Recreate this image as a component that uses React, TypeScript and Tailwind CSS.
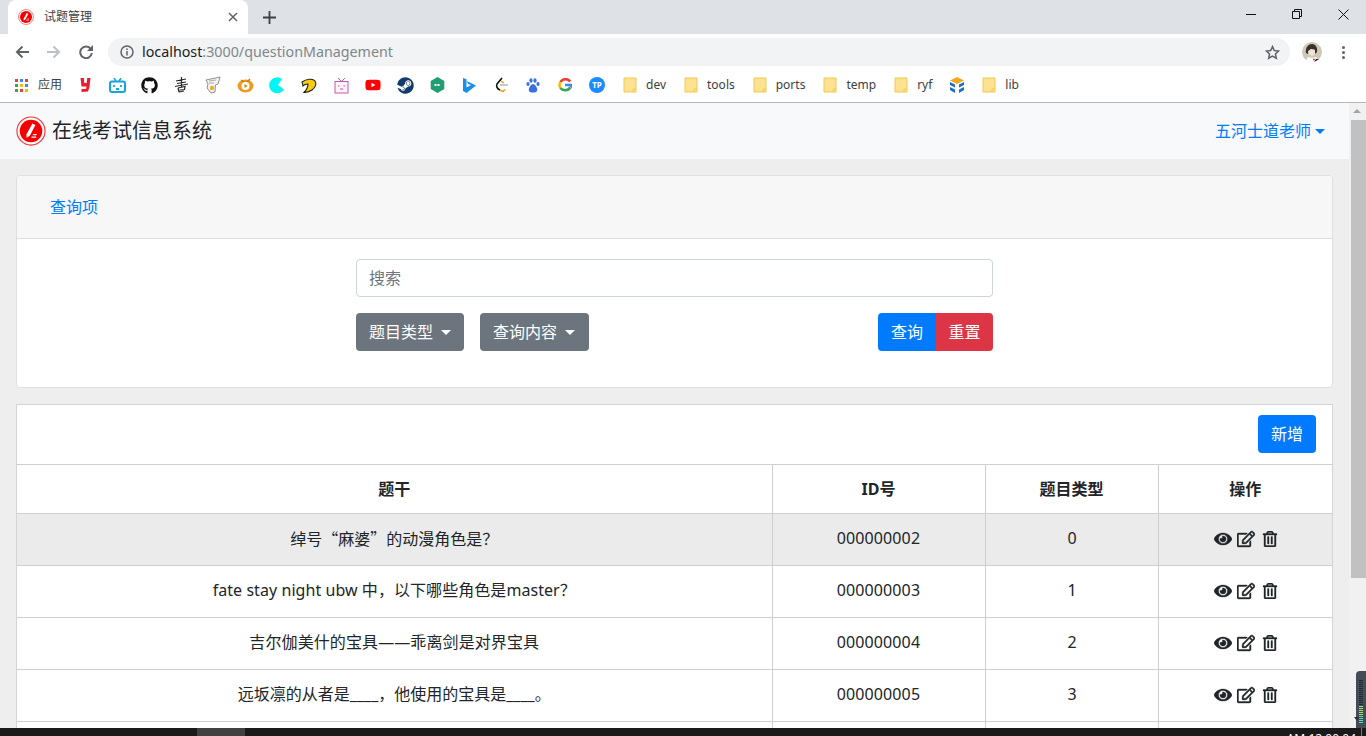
import {FC, ReactNode} from 'react';
import {FaEye, FaRegEdit, FaRegTrashAlt, FaGithub, FaSteam, FaYoutube} from 'react-icons/fa';

const Logo: FC<{size: number}> = ({size}) => (
    <svg width={size} height={size} viewBox="0 0 32 32">
        <circle cx="16" cy="16" r="15" fill="none" stroke="#f53030" strokeWidth="1.200"/>
        <circle cx="16" cy="16" r="12" fill="#f50000"/>
        <path d="M17.500 8l3.200 1.600-6 11.400-3.400 2.200-.1-3.800z" fill="#fff"/>
        <path d="M16.500 22.500h5M18 19.800h4" stroke="#fff" strokeWidth="1.300"/>
    </svg>
);

const Folder: FC = () => (
    <svg width="14" height="16" viewBox="0 0 14 16" className="shrink-0">
        <path d="M1 1h12v14H1z" fill="#fde293" stroke="#f2c94c"/>
        <path d="M10 15v-3h3" fill="none" stroke="#f2c94c"/>
    </svg>
);

const IconBox: FC<{children: ReactNode}> = ({children}) => (
    <div className="w-[32px] h-[20px] flex items-center justify-center shrink-0">{children}</div>
);

const AppsGrid: FC = () => {
    const colors = ['#ea4335', '#4285f4', '#ea4335', '#34a853', '#fbbc05', '#4285f4', '#34a853', '#ea4335', '#fbbc05'];
    return (
        <div className="grid grid-cols-3 gap-[2px] w-[13px]">
            {colors.map((color, i) => <span key={i} className="w-[3px] h-[3px]" style={{backgroundColor: color}}/>)}
        </div>
    );
};

const bookmarkIcons: ReactNode[] = [
    <svg width="11" height="14" viewBox="0 0 11 14"><path d="M.5 0h3.300l.5 5h2.400l.5-5h3.300L9.500 9 8 13.500l-6.500.500V11h4.500l.5-2.500H1.500z" fill="#ec1c2e"/></svg>,
    <svg width="17" height="15" viewBox="0 0 17 15"><path d="M5 0l2 3M12 0l-2 3" stroke="#12a5e0" strokeWidth="1.500"/><rect x="1" y="3.500" width="15" height="10.500" rx="2" fill="none" stroke="#12a5e0" strokeWidth="2"/><path d="M5 7v2M12 7v2M7 11h3" stroke="#12a5e0" strokeWidth="1.800"/></svg>,
    <FaGithub size={17} color="#111"/>,
    <svg width="13" height="16" viewBox="0 0 13 16"><path d="M1 4l10-2M2 6.500l9-1.500M0 9.500l13-2.500M6.500 0v10M3 11l7-1.500-.5 3-5 .5M4 15l5-1M3 11l1 4" stroke="#222" strokeWidth="1.200" fill="none"/></svg>,
    <svg width="17" height="18" viewBox="0 0 17 18"><path d="M1 4l14-3-2 7-2.500 1L10 16l-4 1-4-5 1-4z" fill="#f2f2ee" stroke="#777" strokeWidth=".8"/><path d="M4 5l7-1M4 7l5 0" stroke="#999" strokeWidth=".8"/><circle cx="7" cy="12" r="2.200" fill="#e8b03c"/></svg>,
    <svg width="17" height="16" viewBox="0 0 17 16"><ellipse cx="8.500" cy="9" rx="8" ry="6.500" fill="#ee9a1e"/><path d="M4 3l3 2M13 2l-3 3" stroke="#d07c0a" strokeWidth="1.500"/><circle cx="8.500" cy="9" r="4" fill="#fff"/><path d="M7.500 7l3 2-3 2z" fill="#d07c0a"/></svg>,
    <svg width="16" height="16" viewBox="0 0 16 16"><path d="M13 2A8 8 0 1 0 15 12.500L9 8z" fill="#00f5f5"/></svg>,
    <svg width="16" height="15" viewBox="0 0 16 15"><path d="M1 4c4-3 11-4 13-1s0 7-3 9-6 2.500-8 2.500c2-2 4-5 4-8.500-2 0-4 .5-5 2z" fill="#f8cc10" stroke="#222" strokeWidth="1.100"/></svg>,
    <svg width="15" height="17" viewBox="0 0 15 17"><path d="M4 1l3 3M11 1L8 4" stroke="#c05aa8" strokeWidth="1"/><rect x="1" y="4.500" width="13" height="11.500" fill="#fdf2f8" stroke="#c05aa8"/><path d="M4 9h1.500M9.500 9H11M6 12h3" stroke="#c05aa8"/></svg>,
    <FaYoutube size={16} color="#f00"/>,
    <FaSteam size={17} color="#123a6b"/>,
    <svg width="15" height="16" viewBox="0 0 15 16"><path d="M7.500 0l6.800 4v8l-6.800 4L.7 12V4z" fill="#1e9e72"/><path d="M4.500 8h6" stroke="#fff" strokeWidth="2" strokeDasharray="2 1"/></svg>,
    <svg width="13" height="15" viewBox="0 0 13 15"><path d="M0 0l3.500 1.200v8.300L8 7 5 6 3.800 3 13 7.500 3.500 15 0 13z" fill="#1a8fe8"/></svg>,
    <svg width="14" height="16" viewBox="0 0 14 16"><path d="M8 1L3 7c-1 2 0 5 3 6" fill="none" stroke="#111" strokeWidth="1.600"/><path d="M6 8h8" stroke="#bbb" strokeWidth="1.600"/><path d="M6 13l3 1.500 2-2" fill="none" stroke="#f0a020" strokeWidth="1.600"/><path d="M7 4l3 2" stroke="#f0a020" strokeWidth="1.400"/></svg>,
    <svg width="14" height="15" viewBox="0 0 14 15" fill="#3a70e0"><ellipse cx="2" cy="6" rx="1.600" ry="2"/><ellipse cx="5" cy="2.500" rx="1.600" ry="2.200"/><ellipse cx="9" cy="2.500" rx="1.600" ry="2.200"/><ellipse cx="12" cy="6" rx="1.600" ry="2"/><path d="M7 6c2 0 5 4 4 7-1 2-7 2-8 0-1-3 2-7 4-7z"/></svg>,
    <svg width="14" height="14" viewBox="0 0 14 14" fill="none" strokeWidth="2.600"><path d="M12.300 3.500A6 6 0 0 0 2.400 4" stroke="#ea4335"/><path d="M2.400 4a6 6 0 0 0 0 6" stroke="#fbbc05"/><path d="M2.400 10a6 6 0 0 0 9.800-.5" stroke="#34a853"/><path d="M12.500 9.500c.6-1 .5-2 .4-2.500H7" stroke="#4285f4"/></svg>,
    <span className="w-[16px] h-[16px] rounded-full bg-[#1a8cff] text-white text-[8px] font-bold flex items-center justify-center">TP</span>,
];

const folders = ['dev', 'tools', 'ports', 'temp', 'ryf'];

const questions = [
    {stem: '绰号“麻婆”的动漫角色是？', id: '000000002', type: 0, stemClass: "font-['Noto_Sans_CJK_SC',sans-serif]"},
    {stem: 'fate stay night ubw 中，以下哪些角色是master？', id: '000000003', type: 1, stemClass: 'tracking-[0.06px]'},
    {stem: '吉尔伽美什的宝具——乖离剑是对界宝具', id: '000000004', type: 2, stemClass: 'tracking-[0.1px]'},
    {stem: '远坂凛的从者是____，他使用的宝具是____。', id: '000000005', type: 3, stemClass: ''},
];

const BrowserChrome: FC = () => (
    <header className="shrink-0 h-[103px] border-b border-[#b9b9b9] flex flex-col">
        <div className="h-[34px] bg-[#dee1e6] flex items-end">
            <div className="ml-[8px] w-[240px] h-[34px] bg-white rounded-t-[8px] flex items-center pl-[10px] pr-[10px]">
                <Logo size={16}/>
                <span className="ml-[10px] flex-1 text-[12px] text-[#3c4043]">试题管理</span>
                <svg width="10" height="10" viewBox="0 0 10 10"><path d="M1 1l8 8M9 1l-8 8" stroke="#5f6368" strokeWidth="1.500"/></svg>
            </div>
            <div className="ml-[15px] h-[34px] flex items-center">
                <svg width="13" height="13" viewBox="0 0 13 13"><path d="M6.500 0v13M0 6.500h13" stroke="#3c4043" strokeWidth="1.800"/></svg>
            </div>
            <div className="ml-auto h-[34px] flex items-start pt-[9px]">
                <div className="w-[46px] flex justify-center"><svg width="10" height="10" viewBox="0 0 10 10"><path d="M0 5.500h10" stroke="#111"/></svg></div>
                <div className="w-[46px] flex justify-center"><svg width="10" height="10" viewBox="0 0 10 10" fill="none" stroke="#111"><path d="M.5 2.500h7v7h-7zM2.500 2.500v-2h7v7h-2"/></svg></div>
                <div className="w-[46px] flex justify-center"><svg width="11" height="11" viewBox="0 0 11 11"><path d="M.5.500l10 10M10.500.500l-10 10" stroke="#111"/></svg></div>
            </div>
        </div>
        <div className="h-[36px] bg-white flex items-center">
            <div className="w-[108px] pl-[15px] flex items-center gap-[18px] shrink-0">
                <svg width="14" height="14" viewBox="0 0 14 14" fill="none" stroke="#5f6368" strokeWidth="2"><path d="M14 7H2M7.500 1.500L2 7l5.500 5.500"/></svg>
                <svg width="14" height="14" viewBox="0 0 14 14" fill="none" stroke="#bdc1c6" strokeWidth="2"><path d="M0 7h12M6.500 1.500L12 7l-5.500 5.500"/></svg>
                <svg width="14" height="14" viewBox="0 0 14 14" fill="none"><path d="M11.800 4A5.800 5.800 0 1 0 12.800 8" stroke="#5f6368" strokeWidth="2"/><path d="M14 0v6H8z" fill="#5f6368"/></svg>
            </div>
            <div className="w-[1182px] h-[28px] rounded-full bg-[#f1f3f4] flex items-center pl-[12px] pr-[10px]">
                <svg width="14" height="14" viewBox="0 0 14 14" fill="none" stroke="#5f6368" strokeWidth="1.500"><circle cx="7" cy="7" r="6"/><path d="M7 6v4.500M7 3.500v1.500"/></svg>
                <span className="ml-[8px] flex-1 text-[14.290px] text-[#80868b]"><span className="text-[#202124]">localhost</span>:3000/questionManagement</span>
                <svg width="15" height="15" viewBox="0 0 24 24" fill="none" stroke="#5f6368" strokeWidth="2.400"><path d="M12 2.500l2.900 6.300 6.900.8-5.100 4.700 1.400 6.800-6.100-3.400-6.100 3.400 1.400-6.800L2.200 9.600l6.900-.8z"/></svg>
            </div>
            <svg width="20" height="20" viewBox="0 0 20 20" className="ml-[12px] shrink-0 rounded-full">
                <rect width="20" height="20" fill="#cdc9b8"/>
                <path d="M4 11c-1-6 3-9 6-9s6 3 5 8l-2 2V8l-4-1-3 2v3z" fill="#3a2f2a"/>
                <path d="M7 9l2-2 4 1v4l-3 2-3-2z" fill="#f3e2d4"/>
                <path d="M3 20l3-5 4 1 4-1 3 5z" fill="#fff"/>
                <path d="M9 17l-4 3M14 17h3v3h-5z" fill="#221c1c"/>
                <circle cx="12" cy="17.500" r="1" fill="#d04040"/>
            </svg>
            <div className="ml-[20px] flex flex-col gap-[2px] shrink-0">
                <span className="w-[3px] h-[3px] rounded-full bg-[#5f6368]"/>
                <span className="w-[3px] h-[3px] rounded-full bg-[#5f6368]"/>
                <span className="w-[3px] h-[3px] rounded-full bg-[#5f6368]"/>
            </div>
        </div>
        <div className="h-[32px] pb-[2px] bg-white flex items-center pl-[15px] text-[12px] text-[#3c4043]">
            <AppsGrid/>
            <span className="ml-[10px] mr-[7px]">应用</span>
            {bookmarkIcons.map((icon, i) => <IconBox key={i}>{icon}</IconBox>)}
            <div className="ml-[10px] flex items-center">
                {folders.map(name => (
                    <div key={name} className="flex items-center gap-[9px] mr-[18px]">
                        <Folder/>
                        <span>{name}</span>
                    </div>
                ))}
            </div>
            <svg width="16" height="16" viewBox="0 0 16 16" className="shrink-0 -ml-[1px]">
                <path d="M8 0l7 3.500-7 3.500-7-3.500z" fill="#f5a623"/>
                <path d="M1 5l5 2.500v3L1 8zM15 5l-5 2.500v3L15 8zM1 10l5 2.500V16l-5-3zM15 10l-5 2.500V16l5-3z" fill="#1b6ec2"/>
            </svg>
            <div className="ml-[17px] flex items-center gap-[9px]">
                <Folder/>
                <span>lib</span>
            </div>
        </div>
    </header>
);

const App: FC = () => {
    return (
        <div className="relative h-[736px] w-[1366px] overflow-hidden flex flex-col font-['Noto_Sans','Noto_Sans_CJK_SC',sans-serif] text-[16px] text-[#212529]">
            <BrowserChrome/>

            <div className="flex-1 min-h-0 flex">
                <main className="w-[1349px] shrink-0 bg-[#eeeeee] overflow-hidden">
                    <nav className="h-[56px] bg-[#f8f9fa] flex items-center justify-between pl-[16px] pr-[24px]">
                        <div className="flex items-center gap-[6px]">
                            <Logo size={30}/>
                            <span className="text-[20px] text-[#212529]">在线考试信息系统</span>
                        </div>
                        <div className="flex items-center gap-[4px] text-[#007bff]">
                            <span>五河士道老师</span>
                            <span className="w-0 h-0 border-x-[5px] border-x-transparent border-t-[5px] border-t-[#007bff]"/>
                        </div>
                    </nav>

                    <div className="px-[16px] pt-[16px] flex flex-col gap-[16px]">
                        <section className="h-[213px] bg-white border border-[#dfdfdf] rounded-[4px] overflow-hidden">
                            <div className="h-[63px] bg-[#f7f7f7] border-b border-[#dfdfdf] flex items-center pl-[33px] text-[#007bff]">查询项</div>
                            <div className="w-[637px] ml-[339px] mt-[20px]">
                                <input
                                    placeholder="搜索"
                                    className="w-full h-[38px] px-[12px] border border-[#ced4da] rounded-[4px] placeholder:text-[#6c757d] outline-none"
                                />
                                <div className="mt-[16px] flex items-center">
                                    <button className="h-[38px] px-[13px] bg-[#6c757d] text-white rounded-[4px] flex items-center gap-[8px]">
                                        题目类型
                                        <span className="w-0 h-0 border-x-[5px] border-x-transparent border-t-[5px] border-t-white"/>
                                    </button>
                                    <button className="ml-[16px] h-[38px] pl-[13px] pr-[14px] bg-[#6c757d] text-white rounded-[4px] flex items-center gap-[8px]">
                                        查询内容
                                        <span className="w-0 h-0 border-x-[5px] border-x-transparent border-t-[5px] border-t-white"/>
                                    </button>
                                    <button className="ml-auto h-[38px] w-[58px] bg-[#007bff] text-white rounded-l-[4px]">查询</button>
                                    <button className="h-[38px] w-[57px] bg-[#dc3545] text-white rounded-r-[4px]">重置</button>
                                </div>
                            </div>
                        </section>

                        <section className="bg-white border border-[#d5d5d5] border-b-0">
                            <div className="h-[59px] pb-[2px] flex items-center justify-end pr-[16px]">
                                <button className="h-[38px] w-[58px] bg-[#007bff] text-white rounded-[4px]">新增</button>
                            </div>
                            <table className="w-full table-fixed border-collapse">
                                <colgroup>
                                    <col className="w-[755px]"/>
                                    <col className="w-[213px]"/>
                                    <col className="w-[173px]"/>
                                    <col/>
                                </colgroup>
                                <thead>
                                    <tr className="h-[49px] border-y border-[#cfcfcf]">
                                        <th className="border-r border-[#cfcfcf]">题干</th>
                                        <th className="border-r border-[#cfcfcf]">ID号</th>
                                        <th className="border-r border-[#cfcfcf]">题目类型</th>
                                        <th>操作</th>
                                    </tr>
                                </thead>
                                <tbody>
                                    {questions.map((question, i) => (
                                        <tr key={question.id} className={`h-[52px] border-b border-[#cfcfcf] text-center ${i === 0 ? 'bg-[#ebebeb]' : ''}`}>
                                            <td className={`border-r border-[#cfcfcf] pb-[4px] ${question.stemClass}`}>{question.stem}</td>
                                            <td className="border-r border-[#cfcfcf] pb-[4px] tracking-[0.1px]">{question.id}</td>
                                            <td className="border-r border-[#cfcfcf] pb-[4px] pl-[1px]">{question.type}</td>
                                            <td className="pb-[2px]">
                                                <div className="flex items-center justify-center gap-[5px] pl-[2px]">
                                                    <FaEye size={18} stroke="currentColor" strokeWidth={12}/>
                                                    <FaRegEdit size={18} stroke="currentColor" strokeWidth={12}/>
                                                    <FaRegTrashAlt size={16} stroke="currentColor" strokeWidth={12} className="ml-[2px]"/>
                                                </div>
                                            </td>
                                        </tr>
                                    ))}
                                    <tr className="h-[52px]">
                                        <td className="border-r border-[#cfcfcf]"/>
                                        <td className="border-r border-[#cfcfcf]"/>
                                        <td className="border-r border-[#cfcfcf]"/>
                                        <td/>
                                    </tr>
                                </tbody>
                            </table>
                        </section>
                    </div>
                </main>

                <aside className="w-[17px] bg-[#f1f1f1] flex flex-col items-end">
                    <span className="mt-[6px] mr-[5px] w-0 h-0 border-x-[4px] border-x-transparent border-b-[4px] border-b-[#a3a3a3]"/>
                    <span className="mt-[7px] w-[15px] h-[458px] bg-[#c1c1c1]"/>
                </aside>
            </div>

            <footer className="shrink-0 h-[8px] bg-[#1a1a1a] flex overflow-hidden">
                <span className="ml-[197px] w-[48px] bg-[#414141]"/>
                <span className="ml-auto mt-[4px] text-[12px] leading-[14px] text-white">AM 12:00:04</span>
                <span className="ml-[5px] mr-[4px] w-[1px] bg-[#777]"/>
            </footer>

            {/* volume meter floating over the page corner */}
            <div className="absolute right-0 top-[671px] w-[10px] h-[57px] bg-[#454b57] rounded-tl-[4px] flex flex-col items-center justify-end pb-[5px] gap-[1px]">
                {Array.from({length: 22}).map((_, i) => (
                    <span key={i} className={`w-[4px] h-[1px] ${i < 13 ? 'bg-[#262a30]' : i < 18 ? 'bg-[#9be36d]' : 'bg-[#4fe0b0]'}`}/>
                ))}
            </div>
            <span className="absolute left-[1354px] top-[717px] w-0 h-0 border-x-[3px] border-x-transparent border-t-[4px] border-t-[#333]"/>
        </div>
    );
};

export default App;
